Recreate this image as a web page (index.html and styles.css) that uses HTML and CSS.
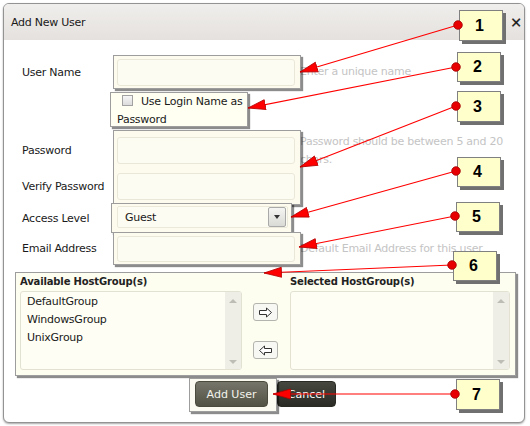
FILE: index.html
```html
<!DOCTYPE html>
<html>
<head>
<meta charset="utf-8">
<link rel="stylesheet" href="styles.css">
</head>
<body>
<div class="dialog">
  <div class="dlg-head"><span class="dlg-title">Add New User</span><span class="dlg-close">×</span></div>
  <div class="dlg-body">
    <div class="row row-user">
      <div class="lbl">User Name</div>
      <div class="hl hl-user"><input class="field" type="text"></div>
      <div class="hint">Enter a unique name</div>
    </div>
    <div class="row row-check">
      <div class="hl hl-check"><span class="cb"></span>Use Login Name as<br>Password</div>
    </div>
    <div class="row row-pass">
      <div class="lbl-stack"><div class="lbl">Password</div><div class="lbl">Verify Password</div></div>
      <div class="hl hl-pass"><input class="field" type="password"><input class="field" type="password"></div>
      <div class="hint hint-pass">Password should be between 5 and 20<br>chars.</div>
    </div>
    <div class="row row-access">
      <div class="lbl">Access Level</div>
      <div class="hl hl-access">
        <div class="select"><span class="select-val">Guest</span><span class="select-btn"><span class="tri-down"></span></span></div>
      </div>
    </div>
    <div class="row row-email">
      <div class="lbl">Email Address</div>
      <div class="hl hl-email"><input class="field" type="text"></div>
      <div class="hint">Default Email Address for this user</div>
    </div>
    <div class="hl hl-groups">
      <div class="grp-title">Available HostGroup(s)</div>
      <div></div>
      <div class="grp-title">Selected HostGroup(s)</div>
      <div class="list">
        <div class="list-items">
          <div>DefaultGroup</div>
          <div>WindowsGroup</div>
          <div>UnixGroup</div>
        </div>
        <div class="scroll"><span class="s-up"></span><span class="s-down"></span></div>
      </div>
      <div class="movers">
        <span class="mv"><svg width="15" height="11" viewBox="0 0 15 11"><path d="M1.5,3.5 H8.5 V1 L13.5,5.5 L8.5,10 V7.5 H1.5 Z" fill="#fff" stroke="#333"/></svg></span>
        <span class="mv"><svg width="15" height="11" viewBox="0 0 15 11"><path d="M13.5,3.5 H6.5 V1 L1.5,5.5 L6.5,10 V7.5 H13.5 Z" fill="#fff" stroke="#333"/></svg></span>
      </div>
      <div class="list">
        <div class="list-items"></div>
        <div class="scroll"><span class="s-up"></span><span class="s-down"></span></div>
      </div>
    </div>
    <div class="actions">
      <div class="hl hl-btn"><button class="btn btn-add">Add User</button></div>
      <button class="btn btn-cancel">Cancel</button>
    </div>
  </div>
</div>

<div class="callout c1">1</div>
<div class="callout c2">2</div>
<div class="callout c3">3</div>
<div class="callout c4">4</div>
<div class="callout c5">5</div>
<div class="callout c6">6</div>
<div class="callout c7">7</div>

<svg class="arrows" width="530" height="426" viewBox="0 0 530 426">
  <defs>
    <marker id="ah" markerWidth="20" markerHeight="12" refX="18" refY="5.5" orient="auto" markerUnits="userSpaceOnUse">
      <path d="M0.5,0.5 L18,5.5 L0.5,10.5 Z" fill="#f00" stroke="#b30000" stroke-width="0.8"/>
    </marker>
  </defs>
  <g stroke="#f00" stroke-width="1.2">
    <line x1="458" y1="25" x2="300" y2="72" marker-end="url(#ah)"/>
    <line x1="456" y1="67" x2="248" y2="108" marker-end="url(#ah)"/>
    <line x1="456" y1="106" x2="300" y2="167" marker-end="url(#ah)"/>
    <line x1="456" y1="171" x2="291" y2="217" marker-end="url(#ah)"/>
    <line x1="455" y1="216" x2="299" y2="247" marker-end="url(#ah)"/>
    <line x1="452" y1="265" x2="264" y2="273" marker-end="url(#ah)"/>
    <line x1="455" y1="394" x2="273" y2="394" marker-end="url(#ah)"/>
  </g>
  <g fill="#e80000" stroke="#a00000" stroke-width="0.8">
    <circle cx="458" cy="25" r="4.3"/>
    <circle cx="456" cy="67" r="4.3"/>
    <circle cx="456" cy="106" r="4.3"/>
    <circle cx="456" cy="171" r="4.3"/>
    <circle cx="455" cy="216" r="4.3"/>
    <circle cx="452" cy="265" r="4.3"/>
    <circle cx="455" cy="394" r="4.3"/>
  </g>
</svg>
</body>
</html>
```
FILE: styles.css
```css
* { box-sizing: border-box; }
html, body { margin: 0; padding: 0; }
body {
  width: 530px;
  height: 426px;
  overflow: hidden;
  background: #fff;
  font-family: "DejaVu Sans", Verdana, sans-serif;
  font-size: 11px;
  letter-spacing: -0.25px;
  color: #1a1a1a;
}
.dialog {
  margin: 3px 0 0 3px;
  width: 522px;
  height: 420px;
  border: 1px solid #939393;
  border-radius: 6px;
  background: #fff;
  box-shadow: 0 1px 2px rgba(0,0,0,.35);
  overflow: hidden;
}
.dlg-head {
  height: 36px;
  display: flex;
  align-items: center;
  justify-content: space-between;
  padding: 0 2px 0 7px;
  background: linear-gradient(#f0eeec, #e4e1de);
}
.dlg-title { color: #1a1a1a; }
.dlg-close { font-size: 14px; color: #111; letter-spacing: 0; -webkit-text-stroke: 0.4px #111; }

.row { display: flex; align-items: center; padding-left: 18px; }
.lbl { flex: 0 0 91px; color: #1a1a1a; }
.hl {
  position: relative;
  z-index: 1;
  background: #fcfbee;
  border: 1px solid #9d9d9d;
  box-shadow: 2px 2px 1px rgba(0,0,0,.45);
}
.field {
  display: block;
  width: 178px;
  height: 27px;
  margin: 0;
  padding: 0 4px;
  border: 1px solid #e9e7d8;
  border-radius: 3px;
  background: #fdfcf2;
  font: inherit;
  outline: none;
}
.hint { color: #c4c4c4; margin-left: -1px; white-space: nowrap; line-height: 18px; }

.row-user { margin-top: 15px; }
.hl-user { width: 188px; height: 34px; padding: 3px 0 0 3px; }

.row-check { margin-top: 3px; padding-left: 106px; }
.hl-check {
  width: 138px;
  height: 35px;
  padding: 0 0 0 6px;
  line-height: 18px;
  white-space: nowrap;
  background: #fffff2;
}
.cb {
  display: inline-block;
  width: 11px;
  height: 11px;
  margin: 0 8px 0 5px;
  vertical-align: -1px;
  border: 1px solid #a2a2a2;
  background: linear-gradient(#f6f6f6, #dcdcdc);
}

.row-pass { margin-top: 3px; align-items: flex-start; }
.lbl-stack { flex: 0 0 91px; padding-top: 7px; }
.lbl-stack .lbl { height: 27px; line-height: 27px; }
.lbl-stack .lbl + .lbl { margin-top: 9px; }
.hl-pass { width: 188px; height: 75px; padding: 6px 0 0 3px; }
.hl-pass .field + .field { margin-top: 9px; }
.hint-pass { margin-top: 3px; }

.row-access { margin-top: -2px; }
.hl-access { margin-left: -2px; width: 181px; height: 30px; padding: 2px 0 0 5px; }
.select {
  display: flex;
  align-items: center;
  width: 171px;
  height: 22px;
  border: 1px solid #ebe9da;
  border-radius: 2px;
  background: #fdfcf2;
}
.select-val { flex: 1; padding-left: 7px; }
.select-btn {
  width: 18px;
  height: 20px;
  margin-right: 1px;
  border: 1px solid #a9a9a9;
  border-radius: 2px;
  background: linear-gradient(#f5f5f3, #d9d9d5);
  display: flex;
  align-items: center;
  justify-content: center;
}
.tri-down {
  width: 0; height: 0;
  border-left: 3.5px solid transparent;
  border-right: 3.5px solid transparent;
  border-top: 4px solid #333;
}

.row-email { margin-top: -1px; }
.hl-email { width: 188px; height: 33px; padding: 3px 0 0 3px; }
.hl-email .field { height: 26px; }

.hl-groups {
  margin: 7px 0 0 11px;
  width: 501px;
  height: 104px;
  padding: 2px 5px 0 4px;
  display: grid;
  grid-template-columns: 222px 48px 220px;
  grid-template-rows: 14px 79px;
  row-gap: 2px;
  background: #fdfdf0;
}
.grp-title { font-weight: bold; font-size: 10px; letter-spacing: -0.15px; line-height: 14px; color: #222; }
.list {
  display: flex;
  height: 79px;
  border: 1px solid #e3e1d1;
  border-radius: 3px;
  background: #fefef4;
}
.list-items { flex: 1; padding: 1px 0 0 6px; line-height: 18px; color: #1a1a1a; }
.scroll {
  width: 16px;
  background: #efeee6;
  display: flex;
  flex-direction: column;
  justify-content: space-between;
  align-items: center;
  padding: 7px 0 5px;
}
.s-up {
  width: 0; height: 0;
  border-left: 4px solid transparent;
  border-right: 4px solid transparent;
  border-bottom: 4px solid #bdbdb5;
}
.s-down {
  width: 0; height: 0;
  border-left: 4px solid transparent;
  border-right: 4px solid transparent;
  border-top: 4px solid #bdbdb5;
}
.movers {
  display: flex;
  flex-direction: column;
  align-items: flex-start;
  gap: 20px;
  padding: 12px 0 0 11px;
}
.mv {
  width: 25px;
  height: 18px;
  border: 1px solid #b4b4ae;
  border-radius: 3px;
  background: #f7f7f3;
  display: flex;
  align-items: center;
  justify-content: center;
}

.actions { display: flex; align-items: flex-start; margin: 2px 0 0 185px; }
.hl-btn { width: 88px; height: 34px; padding: 2px 0 0 5px; background: #fbfbf2; }
.btn {
  font-family: "DejaVu Sans", Verdana, sans-serif;
  font-size: 11px;
  letter-spacing: 0;
  height: 26px;
  padding: 0;
  border-radius: 4px;
  color: #f3f3ec;
}
.btn-add {
  width: 73px;
  border: 1px solid #4a4b3c;
  background: linear-gradient(#75766a, #515243);
}
.btn-cancel {
  width: 59px;
  margin-top: 3px;
  border: 1px solid #2a2a24;
  background: linear-gradient(#46473e, #2a2b25);
  color: #fff;
}

.callout {
  position: absolute;
  z-index: 4;
  width: 44px;
  height: 31px;
  background: #ffffcc;
  border: 1px solid #808080;
  box-shadow: 3px 3px 0 #707070;
  font: bold 16px "Liberation Sans", Arial, sans-serif;
  color: #000;
  display: flex;
  align-items: center;
  justify-content: center;
  padding-right: 3px;
  letter-spacing: 0;
}
.c1 { left: 459px; top: 10px; }
.c2 { left: 457px; top: 52px; height: 30px; }
.c3 { left: 457px; top: 91px; }
.c4 { left: 457px; top: 157px; height: 30px; }
.c5 { left: 456px; top: 202px; height: 30px; }
.c6 { left: 453px; top: 251px; height: 30px; }
.c7 { left: 456px; top: 379px; }
.arrows { position: absolute; left: 0; top: 0; z-index: 5; pointer-events: none; }
```
